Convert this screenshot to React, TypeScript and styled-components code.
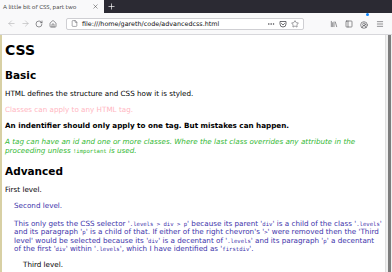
import React from 'react'
import styled, { createGlobalStyle } from 'styled-components'
import {
  ArrowLeft,
  ArrowRight,
  RotateCw,
  Home,
  File,
  MoreHorizontal,
  Star,
  Library,
  PanelLeft,
  CircleUserRound,
  Menu,
  X,
  Plus,
} from 'lucide-react'

const GlobalStyle = createGlobalStyle`
  html, body {
    margin: 0;
    padding: 0;
    overflow: hidden;
    background: #ffffff;
  }
`

const Window = styled('div')`
  width: 392px;
  height: 272px;
  display: flex;
  flex-direction: column;
  overflow: hidden;
  font-family: 'DejaVu Sans', 'Liberation Sans', sans-serif;
`

const TabStrip = styled('div')`
  height: 13px;
  display: flex;
  align-items: stretch;
  background: #2b2a33;
`

const Tab = styled('div')`
  width: 104px;
  display: flex;
  align-items: center;
  justify-content: space-between;
  padding: 0 5px 0 3px;
  box-sizing: border-box;
  background: #f9f9fa;
  color: #333;
  font-size: 6.2px;
  font-family: 'Ubuntu', 'DejaVu Sans', sans-serif;
`

const NewTab = styled('div')`
  width: 14px;
  display: flex;
  align-items: center;
  justify-content: center;
  color: #fff;
`

const NavBar = styled('div')`
  height: 21px;
  display: flex;
  align-items: center;
  padding: 0 4px;
  background: #f9f9fa;
  border-bottom: 1px solid #d7d7db;
`

const NavButton = styled('div')<{ dim?: boolean; w?: number }>`
  width: ${({ w }) => w ?? 14}px;
  display: flex;
  justify-content: center;
  color: ${({ dim }) => (dim ? '#b1b1b3' : '#4a4a4f')};
`

const UrlBox = styled('div')`
  width: 238px;
  height: 12px;
  margin-left: 6px;
  display: flex;
  align-items: center;
  gap: 4px;
  padding: 0 4px;
  box-sizing: border-box;
  background: #fff;
  border: 1px solid #cfcfd3;
  border-radius: 2px;
  color: #0c0c0d;
  font-size: 6.4px;
`

const UrlText = styled('span')`
  flex: 1;
`

const Toolbar = styled('div')`
  display: flex;
  margin-left: auto;
  align-items: center;
`

const Account = styled('div')`
  position: relative;
`

const Dot = styled('span')`
  position: absolute;
  top: -1px;
  right: -1px;
  width: 3px;
  height: 3px;
  border-radius: 50%;
  background: #0a84ff;
`

const Viewport = styled('div')`
  flex: 1;
  display: flex;
  min-height: 0;
`

const Edge = styled('div')`
  width: 2px;
  background: #d8d0a4;
`

const Page = styled('div')`
  flex: 1;
  padding: 6px 3px 0 3px;
  color: #000;
  font-size: 7.2px;
  line-height: 8.4px;
  overflow: hidden;
`

const Scrollbar = styled('div')`
  width: 6px;
  background: #f0f0f0;
  border-left: 1px solid #e0e0e0;
  display: flex;
  justify-content: center;
`

const Thumb = styled('div')`
  width: 3px;
  height: 100%;
  background: #7d7d7d;
`

const Title = styled('h1')`
  margin: 0;
  font-size: 14px;
  line-height: 18px;
  font-weight: bold;
`

const Heading = styled('h2')`
  margin: 10px 0 9px;
  font-size: 10.5px;
  line-height: 12px;
  font-weight: bold;
`

const Para = styled('p')<{
  tone?: 'pink' | 'green' | 'blue'
  bold?: boolean
  italic?: boolean
  gap?: number
}>`
  margin: ${({ gap }) => gap ?? 7}px 0 0;
  color: ${({ tone }) =>
    tone === 'pink' ? '#ffb6c1' : tone === 'green' ? '#33b833' : tone === 'blue' ? '#3c32aa' : '#000'};
  font-weight: ${({ bold }) => (bold ? 'bold' : 'normal')};
  font-style: ${({ italic }) => (italic ? 'italic' : 'normal')};
`

const Code = styled('code')`
  font-family: 'DejaVu Sans Mono', 'Liberation Mono', monospace;
  font-size: 5.6px;
  font-style: normal;
`

const Level = styled('div')<{ indent: number }>`
  padding-left: ${({ indent }) => indent}px;
`

const Pocket = () => (
  <svg width="8" height="8" viewBox="0 0 16 16" fill="none" stroke="#4a4a4f" strokeWidth="1.6">
    <path d="M2 3h12v5a6 6 0 0 1-12 0z" strokeLinejoin="round" />
    <path d="M5 7l3 3 3-3" strokeLinecap="round" strokeLinejoin="round" />
  </svg>
)

const q = (s: string) => (
  <>
    '<Code>{s}</Code>'
  </>
)

export default function App() {
  return (
    <Window>
      <GlobalStyle />
      <TabStrip>
        <Tab>
          <span>A little bit of CSS, part two</span>
          <X size={7} strokeWidth={1.6} />
        </Tab>
        <NewTab>
          <Plus size={9} strokeWidth={1.8} />
        </NewTab>
      </TabStrip>
      <NavBar>
        <NavButton dim>
          <ArrowLeft size={9} strokeWidth={1.6} />
        </NavButton>
        <NavButton dim>
          <ArrowRight size={9} strokeWidth={1.6} />
        </NavButton>
        <NavButton>
          <RotateCw size={8} strokeWidth={1.8} />
        </NavButton>
        <NavButton>
          <Home size={8} strokeWidth={1.8} />
        </NavButton>
        <UrlBox>
          <File size={7} strokeWidth={1.6} color="#4a4a4f" />
          <UrlText>file:///home/gareth/code/advancedcss.html</UrlText>
          <MoreHorizontal size={8} strokeWidth={2} color="#4a4a4f" />
          <Pocket />
          <Star size={8} strokeWidth={1.6} color="#4a4a4f" />
        </UrlBox>
        <Toolbar>
          <NavButton w={15}>
            <Library size={8} strokeWidth={1.8} />
          </NavButton>
          <NavButton w={15}>
            <PanelLeft size={8} strokeWidth={1.8} />
          </NavButton>
          <NavButton w={15}>
            <Account>
              <CircleUserRound size={8} strokeWidth={1.8} />
              <Dot />
            </Account>
          </NavButton>
          <NavButton w={17}>
            <Menu size={8} strokeWidth={1.8} />
          </NavButton>
        </Toolbar>
      </NavBar>
      <Viewport>
        <Edge />
        <Page>
          <Title>CSS</Title>
          <Heading>Basic</Heading>
          <Para>HTML defines the structure and CSS how it is styled.</Para>
          <Para tone="pink" gap={8}>
            Classes can apply to any HTML tag.
          </Para>
          <Para bold>An indentifier should only apply to one tag. But mistakes can happen.</Para>
          <Para tone="green" italic gap={8}>
            A tag can have an id and one or more classes. Where the last class overrides any attribute in the
            proceeding unless <Code>!important</Code> is used.
          </Para>
          <Heading>Advanced</Heading>
          <Para>First level.</Para>
          <Level indent={9}>
            <Para tone="blue" gap={8}>
              Second level.
            </Para>
            <Para tone="blue" gap={9}>
              This only gets the CSS selector {q('.levels > div > p')} because its parent {q('div')} is a child
              of the class {q('.levels')} and its paragraph {q('p')} is a child of that. If either of the right
              chevron's {q('>')} were removed then the 'Third level' would be selected because its {q('div')} is
              a decentant of {q('.levels')} and its paragraph {q('p')} a decentant of the first {q('div')} within{' '}
              {q('.levels')}, which I have identified as {q('firstdiv')}.
            </Para>
            <Level indent={9}>
              <Para gap={8}>Third level.</Para>
            </Level>
          </Level>
        </Page>
        <Scrollbar>
          <Thumb />
        </Scrollbar>
      </Viewport>
    </Window>
  )
}
